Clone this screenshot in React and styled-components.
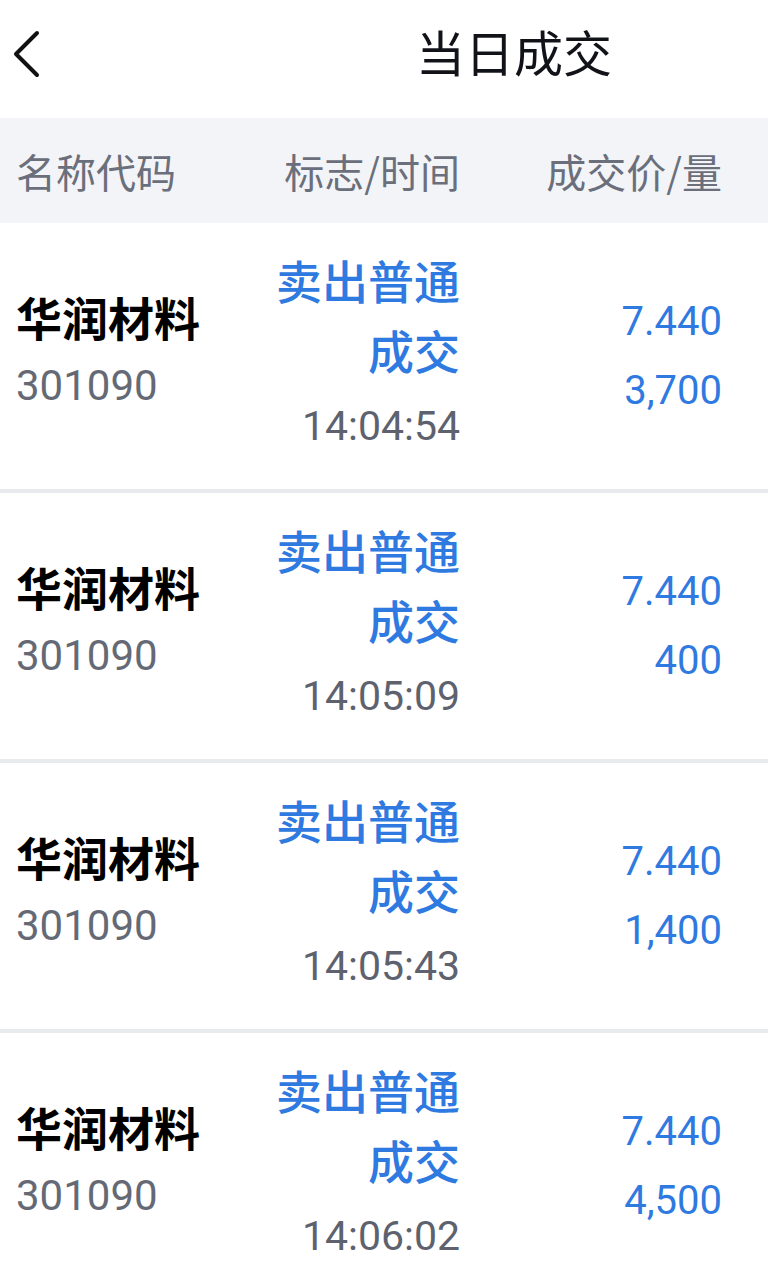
import React from "react";
import styled, { createGlobalStyle } from "styled-components";

const GlobalStyle = createGlobalStyle`
  body {
    margin: 0;
    background: #fff;
    font-family: Roboto, "Noto Sans CJK SC", sans-serif;
  }
`;

const Page = styled.div`
  width: 768px;
  min-height: 1267px;
  background: #fff;
  overflow: hidden;
`;

const TopBar = styled.div`
  height: 100px;
  margin-bottom: 18px;
  display: flex;
  align-items: center;
  padding-left: 12px;
`;

const BackButton = styled.button`
  border: none;
  background: none;
  padding: 0;
  width: 30px;
  height: 48px;
  margin-top: 8px;
  display: flex;
  align-items: center;
  justify-content: center;
`;

const Title = styled.h1`
  margin: 0 156px 0 auto;
  font-family: "Noto Sans CJK SC", sans-serif;
  font-weight: 400;
  font-size: 49px;
  line-height: 1;
  color: #111318;
`;

const Grid = styled.div`
  display: grid;
  grid-template-columns: 1fr 186px 262px;
  padding: 0 46px 0 16px;
  align-items: center;
`;

const HeaderRow = styled(Grid)`
  height: 105px;
  background: #f2f4f7;
`;

const HeaderCell = styled.div`
  font-family: "Noto Sans CJK SC", sans-serif;
  font-size: 40px;
  color: #6a6f7b;
  text-align: ${(p) => (p.right ? "right" : "left")};
  white-space: nowrap;
`;

const Row = styled(Grid)`
  height: 266px;
  border-bottom: 4px solid #e8eaee;
`;

const NameCol = styled.div`
  display: flex;
  flex-direction: column;
  margin-top: -6px;
`;

const Name = styled.div`
  font-family: "Noto Sans CJK SC", sans-serif;
  font-weight: 700;
  font-size: 46px;
  line-height: 66px;
  color: #000;
  white-space: nowrap;
`;

const Code = styled.div`
  font-size: 42px;
  line-height: 74px;
  color: #646975;
`;

const FlagCol = styled.div`
  text-align: right;
`;

const Flag = styled.div`
  font-family: "Noto Sans CJK SC", sans-serif;
  font-weight: 500;
  font-size: 46px;
  line-height: 70px;
  color: #2f7ae0;
`;

const Time = styled.div`
  font-size: 41px;
  line-height: 84px;
  color: #5d626e;
`;

const PriceCol = styled.div`
  text-align: right;
`;

const Num = styled.div`
  font-size: 40px;
  line-height: 69px;
  color: #2f7ae0;
`;

const trades = [
  { time: "14:04:54", qty: "3,700" },
  { time: "14:05:09", qty: "400" },
  { time: "14:05:43", qty: "1,400" },
  { time: "14:06:02", qty: "4,500" },
];

const App = () => (
  <Page>
    <GlobalStyle />
    <TopBar>
      <BackButton>
        <svg width="30" height="48" viewBox="0 0 30 48">
          <path
            d="M25 3 L4 24 L25 45"
            fill="none"
            stroke="#111"
            strokeWidth="4"
            strokeLinecap="round"
            strokeLinejoin="round"
          />
        </svg>
      </BackButton>
      <Title>当日成交</Title>
    </TopBar>
    <HeaderRow>
      <HeaderCell>名称代码</HeaderCell>
      <HeaderCell right>标志/时间</HeaderCell>
      <HeaderCell right>成交价/量</HeaderCell>
    </HeaderRow>
    {trades.map((t) => (
      <Row key={t.time}>
        <NameCol>
          <Name>华润材料</Name>
          <Code>301090</Code>
        </NameCol>
        <FlagCol>
          <Flag>卖出普通成交</Flag>
          <Time>{t.time}</Time>
        </FlagCol>
        <PriceCol>
          <Num>7.440</Num>
          <Num>{t.qty}</Num>
        </PriceCol>
      </Row>
    ))}
  </Page>
);

export default App;
